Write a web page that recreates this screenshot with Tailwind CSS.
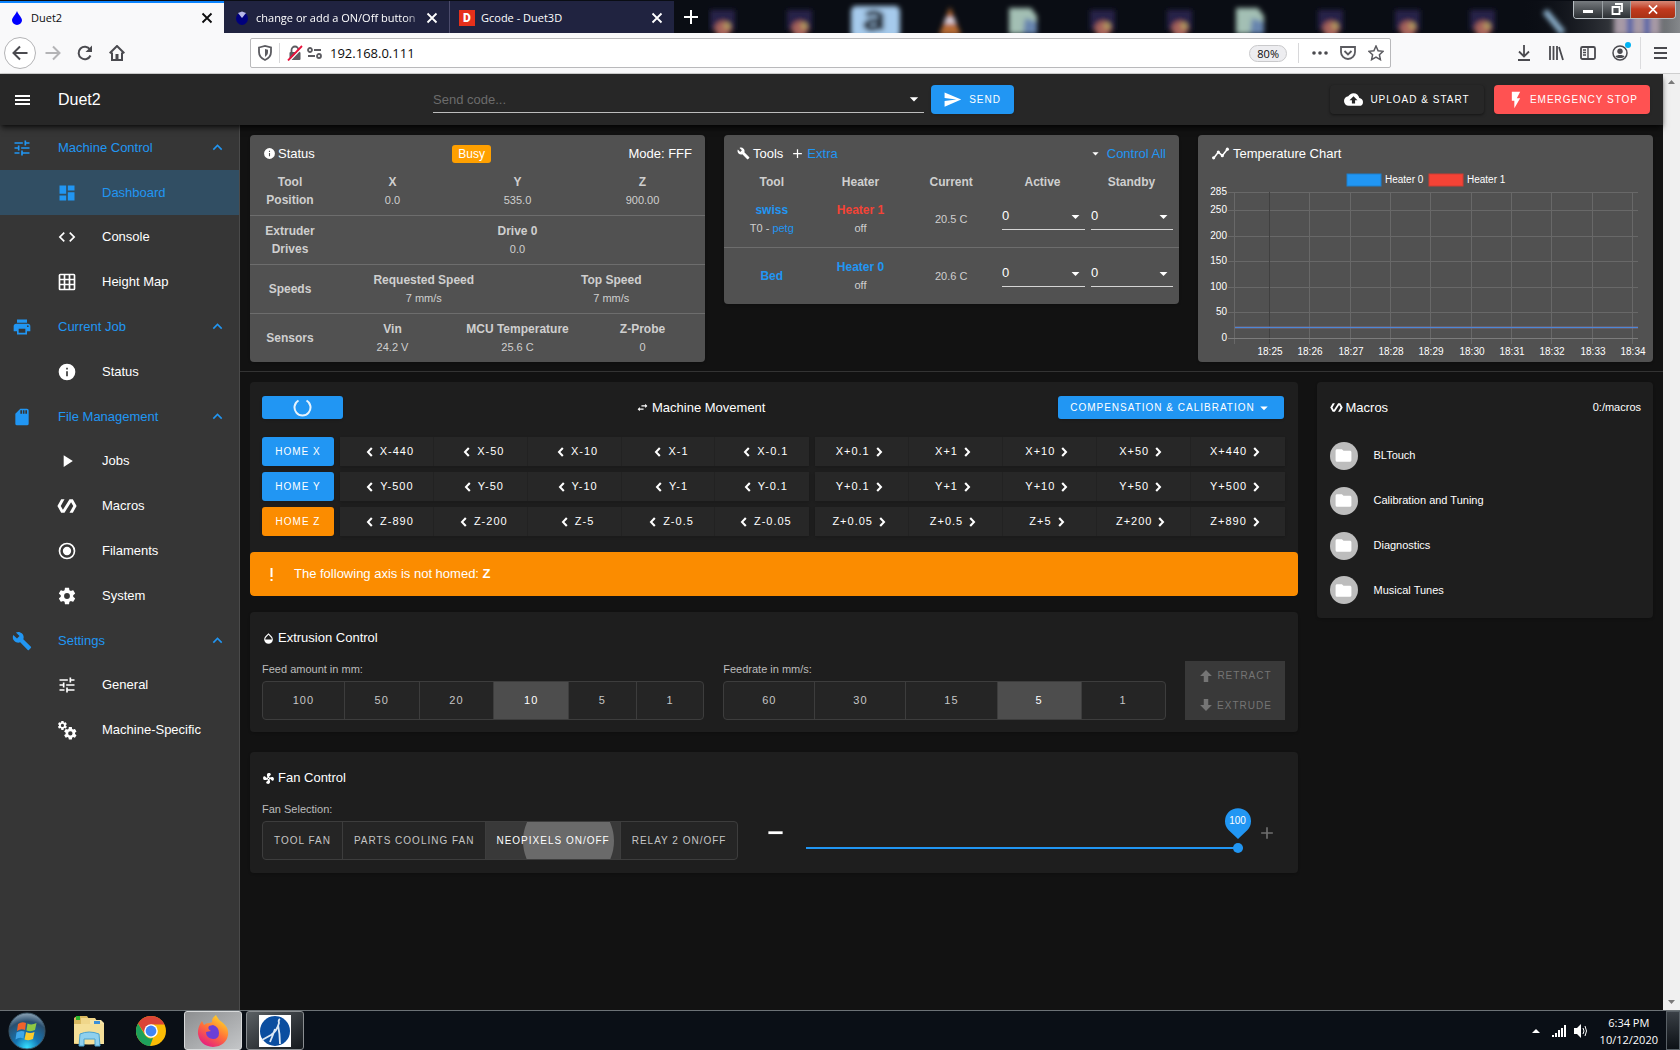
<!DOCTYPE html>
<html lang="en">
<head>
<meta charset="utf-8">
<title>Duet2</title>
<script src="https://cdn.jsdelivr.net/npm/@tailwindcss/browser@4"></script>
</head>
<body class="flex h-screen flex-col overflow-hidden bg-[#121212] font-['Liberation_Sans',Arial,sans-serif] text-[13px] text-white">

<!-- Shared icon set -->
<svg class="hidden" aria-hidden="true">
  <symbol id="tune" viewBox="0 0 24 24"><path d="M3,17V19H9V17H3M3,5V7H13V5H3M13,21V19H21V17H13V15H11V21H13M7,9V11H3V13H7V15H9V9H7M21,13V11H11V13H21M15,9H17V7H21V5H17V3H15V9Z"/></symbol>
  <symbol id="dashboard" viewBox="0 0 24 24"><path d="M13,3V9H21V3M13,21H21V11H13M3,21H11V15H3M3,13H11V3H3V13Z"/></symbol>
  <symbol id="code" viewBox="0 0 24 24"><path d="M14.6,16.6L19.2,12L14.6,7.4L16,6L22,12L16,18L14.6,16.6M9.4,16.6L4.8,12L9.4,7.4L8,6L2,12L8,18L9.4,16.6Z"/></symbol>
  <symbol id="grid" viewBox="0 0 24 24"><path d="M10,4V8H14V4H10M16,4V8H20V4H16M16,10V14H20V10H16M16,16V20H20V16H16M14,20V16H10V20H14M8,20V16H4V20H8M8,14V10H4V14H8M8,8V4H4V8H8M10,14H14V10H10V14M4,2H20A2,2 0 0,1 22,4V20A2,2 0 0,1 20,22H4C2.92,22 2,21.1 2,20V4A2,2 0 0,1 4,2Z"/></symbol>
  <symbol id="printer" viewBox="0 0 24 24"><path d="M18,3H6V7H18M19,12A1,1 0 0,1 18,11A1,1 0 0,1 19,10A1,1 0 0,1 20,11A1,1 0 0,1 19,12M16,19H8V14H16M19,8H5A3,3 0 0,0 2,11V17H6V21H18V17H22V11A3,3 0 0,0 19,8Z"/></symbol>
  <symbol id="info" viewBox="0 0 24 24"><path d="M13,9H11V7H13M13,17H11V11H13M12,2A10,10 0 0,0 2,12A10,10 0 0,0 12,22A10,10 0 0,0 22,12A10,10 0 0,0 12,2Z"/></symbol>
  <symbol id="sd" viewBox="0 0 24 24"><path d="M18,8H16V4H18M15,8H13V4H15M12,8H10V4H12M18,2H10L4,8V20A2,2 0 0,0 6,22H18A2,2 0 0,0 20,20V4A2,2 0 0,0 18,2Z"/></symbol>
  <symbol id="play" viewBox="0 0 24 24"><path d="M8,5.14V19.14L19,12.14L8,5.14Z"/></symbol>
  <symbol id="polymer" viewBox="0 0 24 24"><path d="M19,4H15L7.1,16.63L4.5,12L9,4H5L0.5,12L5,20H9L16.89,7.37L19.5,12L15,20H19L23.5,12L19,4Z"/></symbol>
  <symbol id="radio" viewBox="0 0 24 24"><path d="M12,20A8,8 0 0,1 4,12A8,8 0 0,1 12,4A8,8 0 0,1 20,12A8,8 0 0,1 12,20M12,2A10,10 0 0,0 2,12A10,10 0 0,0 12,22A10,10 0 0,0 22,12A10,10 0 0,0 12,2M12,7A5,5 0 0,0 7,12A5,5 0 0,0 12,17A5,5 0 0,0 17,12A5,5 0 0,0 12,7Z"/></symbol>
  <symbol id="cog" viewBox="0 0 24 24"><path d="M12,15.5A3.5,3.5 0 0,1 8.5,12A3.5,3.5 0 0,1 12,8.5A3.5,3.5 0 0,1 15.5,12A3.5,3.5 0 0,1 12,15.5M19.43,12.97C19.47,12.65 19.5,12.33 19.5,12C19.5,11.67 19.47,11.34 19.43,11L21.54,9.37C21.73,9.22 21.78,8.95 21.66,8.73L19.66,5.27C19.54,5.05 19.27,4.96 19.05,5.05L16.56,6.05C16.04,5.66 15.5,5.32 14.87,5.07L14.5,2.42C14.46,2.18 14.25,2 14,2H10C9.75,2 9.54,2.18 9.5,2.42L9.13,5.07C8.5,5.32 7.96,5.66 7.44,6.05L4.95,5.05C4.73,4.96 4.46,5.05 4.34,5.27L2.34,8.73C2.21,8.95 2.27,9.22 2.46,9.37L4.57,11C4.53,11.34 4.5,11.67 4.5,12C4.5,12.33 4.53,12.65 4.57,12.97L2.46,14.63C2.27,14.78 2.21,15.05 2.34,15.27L4.34,18.73C4.46,18.95 4.73,19.03 4.95,18.95L7.44,17.94C7.96,18.34 8.5,18.68 9.13,18.93L9.5,21.58C9.54,21.82 9.75,22 10,22H14C14.25,22 14.46,21.82 14.5,21.58L14.87,18.93C15.5,18.67 16.04,18.34 16.56,17.94L19.05,18.95C19.27,19.03 19.54,18.95 19.66,18.73L21.66,15.27C21.78,15.05 21.73,14.78 21.54,14.63L19.43,12.97Z"/></symbol>
  <symbol id="cogs" viewBox="0 0 24 24"><use href="#cog" x="0" y="0" width="13" height="13"/><use href="#cog" x="7" y="7" width="18" height="18"/></symbol>
  <symbol id="wrench" viewBox="0 0 24 24"><path d="M22.7,19L13.6,9.9C14.5,7.6 14,4.9 12.1,3C10.1,1 7.1,0.6 4.7,1.7L9,6L6,9L1.6,4.7C0.4,7.1 0.9,10.1 2.9,12.1C4.8,14 7.5,14.5 9.8,13.6L18.9,22.7C19.3,23.1 19.9,23.1 20.3,22.7L22.6,20.4C23.1,20 23.1,19.3 22.7,19Z"/></symbol>
  <symbol id="send" viewBox="0 0 24 24"><path d="M2,21L23,12L2,3V10L17,12L2,14V21Z"/></symbol>
  <symbol id="cloud" viewBox="0 0 24 24"><path d="M14,13V17H10V13H7L12,8L17,13M19.35,10.03C18.67,6.59 15.64,4 12,4C9.11,4 6.6,5.64 5.35,8.03C2.34,8.36 0,10.9 0,14A6,6 0 0,0 6,20H19A5,5 0 0,0 24,15C24,12.36 21.95,10.22 19.35,10.03Z"/></symbol>
  <symbol id="flash" viewBox="0 0 24 24"><path d="M7,2V13H10V22L17,10H13L17,2H7Z"/></symbol>
  <symbol id="up" viewBox="0 0 24 24"><path d="M7.41,15.41L12,10.83L16.59,15.41L18,14L12,8L6,14L7.41,15.41Z"/></symbol>
  <symbol id="left" viewBox="0 0 14 24"><path d="M11.8,17.2L6.8,12L11.8,6.8L9.4,4.5L2.500,12L9.4,19.500Z"/></symbol>
  <symbol id="right" viewBox="0 0 14 24"><path d="M2.200,17.2L7.2,12L2.200,6.8L4.6,4.500L11.500,12L4.6,19.500Z"/></symbol>
  <symbol id="down" viewBox="0 0 24 24"><path d="M7,10L12,15L17,10H7Z"/></symbol>
  <symbol id="plus" viewBox="0 0 24 24"><path d="M19,13H13V19H11V13H5V11H11V5H13V11H19V13Z"/></symbol>
  <symbol id="minus" viewBox="0 0 24 24"><path d="M21,14H3V10.5H21Z"/></symbol>
  <symbol id="trend" viewBox="0 0 24 18"><path d="M2.5 15.5L9 7l5.500 5L21.500 3" fill="none" stroke="currentColor" stroke-width="2.200"/><circle cx="2.500" cy="15" r="2.200"/><circle cx="9" cy="7" r="2.200"/><circle cx="14.500" cy="12" r="2.200"/><circle cx="21.500" cy="3" r="2.200"/></symbol>
  <symbol id="swap" viewBox="0 0 24 24"><path d="M21,9L17,5V8H10V10H17V13M7,11L3,15L7,19V16H14V14H7V11Z"/></symbol>
  <symbol id="drop" viewBox="0 0 24 24"><path d="M17.66,8L12,2.35L6.34,8C4.78,9.56 4,11.64 4,13.64C4,15.64 4.78,17.75 6.34,19.31C7.9,20.87 9.95,21.66 12,21.66C14.05,21.66 16.1,20.87 17.66,19.31C19.22,17.75 20,15.64 20,13.64C20,11.64 19.22,9.56 17.66,8M6,14C6,12 6.62,10.73 7.76,9.6L12,5.27L16.24,9.65C17.38,10.77 18,12 18,14H6Z"/></symbol>
  <symbol id="fan" viewBox="0 0 24 24"><path d="M12,11A1,1 0 0,0 11,12A1,1 0 0,0 12,13A1,1 0 0,0 13,12A1,1 0 0,0 12,11M12.5,2C17,2 17.11,5.57 14.75,6.75C13.76,7.24 13.32,8.29 13.13,9.22C13.61,9.42 14.03,9.73 14.35,10.13C18.05,8.13 22.03,8.92 22.03,12.5C22.03,17 18.46,17.1 17.28,14.73C16.78,13.74 15.72,13.3 14.79,13.11C14.59,13.59 14.28,14 13.88,14.34C15.87,18.03 15.08,22 11.5,22C7,22 6.91,18.42 9.27,17.24C10.25,16.75 10.69,15.71 10.89,14.79C10.4,14.59 9.97,14.27 9.65,13.87C5.96,15.85 2,15.07 2,11.5C2,7 5.56,6.89 6.74,9.26C7.24,10.25 8.29,10.68 9.22,10.87C9.41,10.39 9.73,9.97 10.14,9.65C8.15,5.96 8.94,2 12.5,2Z"/></symbol>
  <symbol id="boldup" viewBox="0 0 24 24"><path d="M15,20H9V12H4.16L12,4.16L19.84,12H15V20Z"/></symbol>
  <symbol id="bolddown" viewBox="0 0 24 24"><path d="M9,4H15V12H19.84L12,19.84L4.16,12H9V4Z"/></symbol>
  <symbol id="folder" viewBox="0 0 24 24"><path d="M10,4H4C2.89,4 2,4.89 2,6V18A2,2 0 0,0 4,20H20A2,2 0 0,0 22,18V8C22,6.89 21.1,6 20,6H12L10,4Z"/></symbol>
  <symbol id="close" viewBox="0 0 12 12"><path d="M1.500 1.500l9 9M10.500 1.500l-9 9" fill="none" stroke="currentColor" stroke-width="1.800"/></symbol>
</svg>

<!-- Browser tabs -->
<div class="flex h-[33px] shrink-0 bg-[#0a0d14] pt-px font-['Open_Sans',sans-serif] text-[11px]">
  <div class="flex w-[224px] items-center border-t-2 border-[#0a84ff] bg-[#f9f9fa] pr-[11px] pl-3 text-[#0c0c0d]">
    <svg class="mr-[9px] h-[14px] w-[10px]" viewBox="0 0 10 14"><path d="M5 0C6.500 4 10 6.500 10 9.300A5 4.700 0 0 1 0 9.300C0 6.500 3.500 4 5 0Z" fill="#00f"/></svg>
    <span class="flex-1">Duet2</span>
    <button aria-label="Close tab"><svg class="size-[12px]"><use href="#close"/></svg></button>
  </div>
  <div class="flex w-[226px] items-center border-r border-[#4b4b6b] bg-[#202340] pt-[2px] pr-[11px] pl-3">
    <svg class="mr-2 h-[14px] w-[12px]" viewBox="0 0 12 14"><ellipse cx="6" cy="7.500" rx="6" ry="6.500" fill="#00007d"/><path d="M2 2l4-1.500L10 2 6 7Z" fill="#b8b8e8"/></svg>
    <span class="mr-1 w-0 flex-1 overflow-hidden mask-r-from-90% mask-r-to-100% whitespace-nowrap">change or add a ON/Off button</span>
    <button aria-label="Close tab"><svg class="size-[12px]"><use href="#close"/></svg></button>
  </div>
  <div class="flex w-[224px] items-center bg-[#202340] pt-[2px] pr-[11px] pl-[9px]">
    <span class="mr-[6px] flex size-4 items-center justify-center bg-[#e6301b] font-['Roboto',sans-serif] text-[12px] font-black">D</span>
    <span class="flex-1">Gcode - Duet3D</span>
    <button aria-label="Close tab"><svg class="size-[12px]"><use href="#close"/></svg></button>
  </div>
  <button class="px-[9px]" aria-label="New tab"><svg class="size-4" viewBox="0 0 16 16"><path d="M8 1v14M1 8h14" stroke="#fff" stroke-width="2"/></svg></button>
  <!-- Desktop icons seen through the glass title bar -->
  <div class="relative min-w-0 flex-1 overflow-hidden">
    <svg class="-ml-7 h-8 w-[1000px]" viewBox="0 0 1000 32" preserveAspectRatio="none">
      <defs>
        <filter id="soft"><feGaussianBlur stdDeviation="2.500"/></filter>
        <linearGradient id="glass" x1="0" x2="1"><stop offset=".84" stop-color="#0a0d14" stop-opacity="0"/><stop offset="1" stop-color="#85888b"/></linearGradient>
        <g id="app"><rect x="-12" y="9" width="25" height="20" fill="#25224a"/><circle cx="1" cy="28" r="8" fill="#a8635c"/><circle cx="5" cy="25" r="3" fill="#b9a560"/></g>
        <g id="doc"><path d="M-14 7H8l6 8v18h-28Z" fill="#a3bfb4"/><path d="M2 17l12 4v12H0Z" fill="#6785ae"/></g>
      </defs>
      <rect width="1000" height="32" fill="url(#glass)"/>
      <g filter="url(#soft)">
        <use href="#app" x="42"/><use href="#app" x="119"/>
        <rect x="171" y="5" width="49" height="32" rx="5" fill="#a6caec"/><path d="M186 14q8-5 15 0v15M201 20q-16-1-15 5 5 6 15-1" fill="none" stroke="#0a0d14" stroke-width="5"/>
        <path d="M270 6l11 28h-22Z" fill="#b76c36"/><path d="M266 17h8l2 5h-12Z" fill="#dde"/>
        <use href="#doc" x="343"/><use href="#app" x="422"/><use href="#app" x="499"/><use href="#doc" x="570"/>
        <use href="#app" x="650"/><use href="#app" x="727"/><use href="#app" x="802"/>
        <path d="M865 10l18 22" stroke="#8fb4d0" stroke-width="6"/>
        <path d="M934 10h46v24h-46Z" fill="#a79aa6"/><path d="M947 14h6v20h-6zM964 14h6v20h-6z" fill="#4f62a8"/>
      </g>
    </svg>
    <div class="absolute -top-px right-1 flex h-[19px] w-[103px] overflow-hidden rounded-b border border-t-0 border-[#b9bfc4] text-white">
      <button class="flex flex-[29] items-center justify-center border-r border-[#9aa0a4] bg-linear-to-b from-[#7c8084] to-[#2b2f33]" aria-label="Minimize"><svg class="h-3 w-3" viewBox="0 0 12 12"><path d="M1 7h10v3H1z" fill="#fff"/></svg></button>
      <button class="flex flex-[27] items-center justify-center border-r border-[#9aa0a4] bg-linear-to-b from-[#7c8084] to-[#2b2f33]" aria-label="Restore"><svg class="size-3" viewBox="0 0 12 12"><path d="M4 1h7v7H9M1.500 4h7v7h-7z" fill="none" stroke="#fff" stroke-width="1.800"/></svg></button>
      <button class="flex flex-[45] items-center justify-center bg-linear-to-b from-[#d8907f] via-[#c23a1e] to-[#a83214]" aria-label="Close"><svg class="h-[11px] w-[12px]"><use href="#close"/></svg></button>
    </div>
  </div>
</div>

<!-- Address bar -->
<div class="flex h-[41px] shrink-0 items-center border-b border-[#cfcfcf] bg-[#f9f9fa] pl-1 font-['Open_Sans',sans-serif] text-[#4a4a4f]">
  <button class="flex size-8 items-center justify-center rounded-full border border-[#b4b4b6] bg-white" aria-label="Back"><svg class="size-4" viewBox="0 0 16 16"><path d="M15.500 8H2M8 1.500L1.500 8 8 14.500" fill="none" stroke="#4a4a4f" stroke-width="2"/></svg></button>
  <button class="flex w-[33px] justify-center" aria-label="Forward"><svg class="size-4" viewBox="0 0 16 16"><path d="M.5 8H14M8 1.500L14.500 8 8 14.500" fill="none" stroke="#b4b4b6" stroke-width="2"/></svg></button>
  <button class="flex w-8 justify-center" aria-label="Reload"><svg class="size-4" viewBox="0 0 16 16"><path d="M13.500 10.500A6.200 6.200 0 1 1 13 4.500" fill="none" stroke="#4a4a4f" stroke-width="2"/><path d="M15 .5V7H8.500Z" fill="#4a4a4f"/></svg></button>
  <button class="flex w-8 justify-center" aria-label="Home"><svg class="size-4" viewBox="0 0 16 16"><path d="M.7 8.300L8 1l7.300 7.300M3 7.500V15h10V7.500" fill="none" stroke="#4a4a4f" stroke-width="2"/><path d="M6.500 9h3v6h-3z" fill="#4a4a4f"/></svg></button>
  <div class="ml-[117px] flex h-[30px] flex-1 items-center rounded-xs border border-[#b9b9bb] bg-white">
    <svg class="ml-[7px] h-4 w-[14px]" viewBox="0 0 14 16"><path d="M1 2.500L7 1l6 1.500V7c0 4-2.500 6.500-6 8-3.500-1.500-6-4-6-8Z" fill="none" stroke="#5b5b60" stroke-width="1.800"/><path d="M7 4l3 .7V7c0 2-1 3.500-3 5Z" fill="#5b5b60"/></svg>
    <span class="mx-[7px] h-5 w-px bg-[#d8d8da]"></span>
    <svg class="size-4" viewBox="0 0 16 16"><path d="M4.500 7V5a3.500 3.500 0 0 1 7 0v2" fill="none" stroke="#5b5b60" stroke-width="1.800"/><rect x="2.500" y="7" width="11" height="8" rx="1" fill="#5b5b60"/><path d="M2 16.500L16 2" stroke="#fff" stroke-width="1.500"/><path d="M1 15.500L15 1" stroke="#e8123c" stroke-width="1.800"/></svg>
    <svg class="ml-1 h-3 w-[15px]" viewBox="0 0 15 12"><g fill="none" stroke="#5b5b60" stroke-width="1.800"><circle cx="3" cy="3" r="2"/><path d="M7 3h7M1 9h7"/><circle cx="12" cy="9" r="2"/></g></svg>
    <input class="ml-2 min-w-0 flex-1 pt-px text-[13px] text-[#0c0c0d] outline-none" aria-label="Address" value="192.168.0.111">
    <span class="mr-[11px] rounded-full border border-[#c9c9cb] bg-[#ededf0] px-[7px] text-[11px]/[15px] text-[#0c0c0d]">80%</span>
    <span class="mr-[13px] h-5 w-px bg-[#d8d8da]"></span>
    <svg class="mr-[12px] h-1 w-4" viewBox="0 0 16 4" fill="#4a4a4f"><circle cx="2" cy="2" r="1.800"/><circle cx="8" cy="2" r="1.800"/><circle cx="14" cy="2" r="1.800"/></svg>
    <svg class="mr-[12px] size-4" viewBox="0 0 16 16" fill="none" stroke="#5b5b60" stroke-width="1.800"><path d="M1 2h14v5a7 7 0 0 1-14 0ZM4.500 6L8 9.500 11.500 6"/></svg>
    <svg class="mr-[6px] size-4" viewBox="0 0 16 16" fill="none" stroke="#5b5b60" stroke-width="1.500"><path d="M8 1l2.100 4.700 5 .6-3.700 3.400 1 5L8 12.200 3.600 14.700l1-5L.9 6.300l5-.6Z"/></svg>
  </div>
  <div class="ml-[125px] flex items-center gap-4">
    <svg class="size-4" viewBox="0 0 16 16" fill="none" stroke="#4a4a4f" stroke-width="1.800"><path d="M8 0v11M3 6.500l5 5 5-5M2 15h12"/></svg>
    <svg class="size-4" viewBox="0 0 16 16" fill="none" stroke="#4a4a4f" stroke-width="1.800"><path d="M2 1v14M5.500 1v14M9 1v14M11 2l4 13"/></svg>
    <svg class="size-4" viewBox="0 0 16 16" fill="none" stroke="#4a4a4f" stroke-width="1.800"><rect x="1" y="2" width="14" height="12" rx="1.500"/><path d="M8 2v12M3 5h3M3 7.500h3M3 10h3" stroke-width="1.400"/></svg>
    <div class="relative"><svg class="size-4" viewBox="0 0 16 16"><circle cx="8" cy="8" r="7" fill="none" stroke="#4a4a4f" stroke-width="1.500"/><circle cx="8" cy="6.300" r="2.700" fill="#4a4a4f"/><path d="M3.500 11.500c1-2 8-2 9 0C11 13.500 5 13.500 3.500 11.500Z" fill="#4a4a4f"/></svg><span class="absolute -top-[3px] -right-[3px] size-[6px] rounded-full bg-[#00b3f4]"></span></div>
  </div>
  <span class="mr-[13px] ml-3 h-8 w-px bg-[#dcdcde]"></span>
  <svg class="mr-[13px] h-[12px] w-[13px]" viewBox="0 0 13 12"><path d="M0 1h13M0 6h13M0 11h13" stroke="#4a4a4f" stroke-width="2"/></svg>
</div>

<div class="flex min-h-0 flex-1">
  <div class="flex min-w-0 flex-1 flex-col">
    <!-- Application bar -->
    <header class="relative flex h-[51px] shrink-0 items-center bg-[#272727] pr-[13px] pl-[15px] shadow-md shadow-black/60">
      <button class="mr-[28px]" aria-label="Menu"><svg class="h-[10px] w-[15px]" viewBox="0 0 15 10"><path d="M0 1h15M0 5h15M0 9h15" stroke="#fff" stroke-width="2"/></svg></button>
      <h1 class="text-[16px]">Duet2</h1>
      <div class="flex-[21]"></div>
      <div class="flex h-[27px] flex-[31] items-center border-b border-[#bdbdbd]">
        <input class="min-w-0 flex-1 pt-px text-[13px] outline-none placeholder:text-[#6c6c6c]" aria-label="Send code" placeholder="Send code...">
        <svg class="size-[20px] fill-white"><use href="#down"/></svg>
      </div>
      <button class="ml-[7px] flex h-[29px] w-[83px] items-center justify-center gap-[7px] rounded bg-[#2196f3] text-[10px] tracking-[1px] shadow"><svg class="size-[19px] fill-white"><use href="#send"/></svg>SEND</button>
      <div class="flex-[20]"></div>
      <button class="flex h-[29px] w-[154px] items-center justify-center gap-[7px] rounded bg-[#272727] text-[10px] tracking-[1px] shadow-[0_1px_3px_rgba(0,0,0,0.5)]"><svg class="size-[19px] fill-white"><use href="#cloud"/></svg>UPLOAD &amp; START</button>
      <button class="ml-[10px] flex h-[29px] w-[156px] items-center justify-center gap-1 rounded bg-[#ff5252] text-[10px] tracking-[1px] shadow"><svg class="size-[20px] fill-white"><use href="#flash"/></svg>EMERGENCY STOP</button>
    </header>

    <div class="flex min-h-0 flex-1">
      <!-- Navigation drawer -->
      <nav class="w-60 shrink-0 border-r border-[#4a4a4a] bg-[#363636]">
        <a href="#" class="flex h-[45px] items-center pr-3 pl-3 text-[#2196f3]"><svg class="mr-[26px] size-[20px] fill-current"><use href="#tune"/></svg><span class="flex-1">Machine Control</span><svg class="size-[19px] fill-current"><use href="#up"/></svg></a>
        <a href="#" class="flex h-[45px] items-center bg-[#314e63] pl-[57px] text-[#2196f3]"><svg class="mr-[25px] size-[20px] fill-current"><use href="#dashboard"/></svg>Dashboard</a>
        <a href="#" class="flex h-11 items-center pl-[57px]"><svg class="mr-[25px] size-[20px] fill-current"><use href="#code"/></svg>Console</a>
        <a href="#" class="flex h-[45px] items-center pl-[57px]"><svg class="mr-[25px] size-[20px] fill-current"><use href="#grid"/></svg>Height Map</a>
        <a href="#" class="flex h-[45px] items-center pr-3 pl-3 text-[#2196f3]"><svg class="mr-[26px] size-[20px] fill-current"><use href="#printer"/></svg><span class="flex-1">Current Job</span><svg class="size-[19px] fill-current"><use href="#up"/></svg></a>
        <a href="#" class="flex h-[45px] items-center pl-[57px]"><svg class="mr-[25px] size-[20px] fill-current"><use href="#info"/></svg>Status</a>
        <a href="#" class="flex h-[45px] items-center pr-3 pl-3 text-[#2196f3]"><svg class="mr-[26px] size-[20px] fill-current"><use href="#sd"/></svg><span class="flex-1">File Management</span><svg class="size-[19px] fill-current"><use href="#up"/></svg></a>
        <a href="#" class="flex h-11 items-center pl-[57px]"><svg class="mr-[25px] size-[20px] fill-current"><use href="#play"/></svg>Jobs</a>
        <a href="#" class="flex h-[45px] items-center pl-[57px]"><svg class="mr-[25px] size-[20px] fill-current"><use href="#polymer"/></svg>Macros</a>
        <a href="#" class="flex h-[45px] items-center pl-[57px]"><svg class="mr-[25px] size-[20px] fill-current"><use href="#radio"/></svg>Filaments</a>
        <a href="#" class="flex h-[45px] items-center pl-[57px]"><svg class="mr-[25px] size-[20px] fill-current"><use href="#cog"/></svg>System</a>
        <a href="#" class="flex h-[45px] items-center pr-3 pl-3 text-[#2196f3]"><svg class="mr-[26px] size-[20px] fill-current"><use href="#wrench"/></svg><span class="flex-1">Settings</span><svg class="size-[19px] fill-current"><use href="#up"/></svg></a>
        <a href="#" class="flex h-11 items-center pl-[57px]"><svg class="mr-[25px] size-[20px] fill-current"><use href="#tune"/></svg>General</a>
        <a href="#" class="flex h-[45px] items-center pl-[57px]"><svg class="mr-[25px] size-[20px] fill-current"><use href="#cogs"/></svg>Machine-Specific</a>
      </nav>

      <main class="min-w-0 flex-1">
        <div class="grid grid-cols-3 items-start gap-[19px] border-b border-[#333] px-[10px] pt-[10px] pb-[9px]">
          <!-- Status -->
          <section class="overflow-hidden rounded bg-[#515151] shadow">
            <div class="flex h-[31px] items-center justify-between px-[13px] pt-[6px]">
              <h2 class="flex items-center gap-[2px]"><svg class="size-[13px] fill-white"><use href="#info"/></svg>Status</h2>
              <span class="rounded-[3px] bg-[#ffa000] px-[6px] text-[12px]/[18px]">Busy</span>
              <span>Mode: FFF</span>
            </div>
            <table class="w-full table-fixed text-center text-[11px]/[18px] text-[#cfcfcf]">
              <colgroup><col class="w-20"><col span="6"></colgroup>
              <tbody>
                <tr class="h-[49px]"><th class="pt-[2px] text-[12px]">Tool<br>Position</th><td colspan="2" class="pt-[2px]"><b class="text-[12px]">X</b><br>0.0</td><td colspan="2" class="pt-[2px]"><b class="text-[12px]">Y</b><br>535.0</td><td colspan="2" class="pt-[2px]"><b class="text-[12px]">Z</b><br>900.00</td></tr>
                <tr class="h-[49px] border-t border-[#6d6d6d]"><th class="text-[12px]">Extruder<br>Drives</th><td colspan="6"><b class="text-[12px]">Drive 0</b><br>0.0</td></tr>
                <tr class="h-[49px] border-t border-[#6d6d6d]"><th class="text-[12px]">Speeds</th><td colspan="3"><b class="text-[12px]">Requested Speed</b><br>7 mm/s</td><td colspan="3"><b class="text-[12px]">Top Speed</b><br>7 mm/s</td></tr>
                <tr class="h-[49px] border-t border-[#6d6d6d]"><th class="text-[12px]">Sensors</th><td colspan="2"><b class="text-[12px]">Vin</b><br>24.2 V</td><td colspan="2"><b class="text-[12px]">MCU Temperature</b><br>25.6 C</td><td colspan="2"><b class="text-[12px]">Z-Probe</b><br>0</td></tr>
              </tbody>
            </table>
          </section>

          <!-- Tools -->
          <section class="overflow-hidden rounded bg-[#515151] shadow">
            <div class="flex h-[31px] items-center px-[13px] pt-[6px]">
              <h2 class="flex items-center gap-[3px]"><svg class="size-[13px] fill-white"><use href="#wrench"/></svg>Tools</h2>
              <a href="#" class="ml-[7px] flex items-center gap-[2px] text-[#2196f3]"><svg class="size-[15px] fill-white"><use href="#plus"/></svg>Extra</a>
              <a href="#" class="ml-auto flex items-center gap-1 text-[#2196f3]"><svg class="size-[15px] fill-white"><use href="#down"/></svg>Control All</a>
            </div>
            <table class="w-full table-fixed text-center text-[11px]/[18px] text-[#cfcfcf]">
              <colgroup><col class="w-[21%]"><col class="w-[18%]"><col class="w-[21%]"><col class="w-[20%]"><col class="w-[20%]"></colgroup>
              <thead><tr class="h-[25px] align-bottom text-[12px]"><th>Tool</th><th>Heater</th><th class="pl-1">Current</th><th>Active</th><th class="pr-1">Standby</th></tr></thead>
              <tbody>
                <tr class="h-[56px]">
                  <td><a href="#" class="text-[12px] font-bold text-[#2196f3]">swiss</a><br>T0 - <a href="#" class="text-[#2196f3]">petg</a></td>
                  <td><a href="#" class="text-[12px] font-bold text-[#f44336]">Heater 1</a><br>off</td>
                  <td class="pl-1">20.5 C</td>
                  <td class="pr-[3px] pb-1 pl-[5px]"><label class="flex h-[27px] items-center border-b border-[#d5d5d5]"><select aria-label="Heater 1 active temperature" class="min-w-0 flex-1 appearance-none text-[13px] text-white"><option>0</option></select><svg class="size-[19px] fill-white"><use href="#down"/></svg></label></td>
                  <td class="pr-[6px] pb-1 pl-[3px]"><label class="flex h-[27px] items-center border-b border-[#d5d5d5]"><select aria-label="Heater 1 standby temperature" class="min-w-0 flex-1 appearance-none text-[13px] text-white"><option>0</option></select><svg class="size-[19px] fill-white"><use href="#down"/></svg></label></td>
                </tr>
                <tr class="h-[57px] border-t border-[#6d6d6d]">
                  <td><a href="#" class="text-[12px] font-bold text-[#2196f3]">Bed</a></td>
                  <td><a href="#" class="text-[12px] font-bold text-[#2196f3]">Heater 0</a><br>off</td>
                  <td class="pl-1">20.6 C</td>
                  <td class="pr-[3px] pb-1 pl-[5px]"><label class="flex h-[27px] items-center border-b border-[#d5d5d5]"><select aria-label="Bed active temperature" class="min-w-0 flex-1 appearance-none text-[13px] text-white"><option>0</option></select><svg class="size-[19px] fill-white"><use href="#down"/></svg></label></td>
                  <td class="pr-[6px] pb-1 pl-[3px]"><label class="flex h-[27px] items-center border-b border-[#d5d5d5]"><select aria-label="Bed standby temperature" class="min-w-0 flex-1 appearance-none text-[13px] text-white"><option>0</option></select><svg class="size-[19px] fill-white"><use href="#down"/></svg></label></td>
                </tr>
              </tbody>
            </table>
          </section>

          <!-- Temperature chart -->
          <section class="overflow-hidden rounded bg-[#515151] shadow">
            <div class="flex h-[31px] items-center px-[13px] pt-[6px]">
              <h2 class="flex items-center gap-[3px]"><svg class="h-[13px] w-[19px] fill-white"><use href="#trend"/></svg>Temperature Chart</h2>
            </div>
            <svg class="w-full" viewBox="0 0 455 196" font-size="10" fill="#fff">
              <rect x="149" y="8" width="34" height="12" fill="#2196f3" stroke="#1d80cf"/><text x="187" y="17">Heater 0</text>
              <rect x="231" y="8" width="34" height="12" fill="#f44336" stroke="#cf3d33"/><text x="269" y="17">Heater 1</text>
              <path d="M30 26.500H440M30 44.500H440M30 70.500H440M30 95.500H440M30 121.500H440M30 146.500H440M36.500 26V178M111.500 26V178M152.500 26V178M192.500 26V178M232.500 26V178M273.500 26V178M313.500 26V178M353.500 26V178M394.500 26V178M434.500 26V178" stroke="#686868" fill="none"/>
              <path d="M71.500 26V178" stroke="#404040"/><path d="M30 172.500H440" stroke="#7c7c7c"/>
              <path d="M37 161.500H440" stroke="#7a6a84" stroke-width="2"/><path d="M37 161.500H440" stroke="#4c88d6"/>
              <g text-anchor="end"><text x="29" y="29">285</text><text x="29" y="47">250</text><text x="29" y="73">200</text><text x="29" y="98">150</text><text x="29" y="124">100</text><text x="29" y="149">50</text><text x="29" y="175">0</text></g>
              <g text-anchor="middle"><text x="72" y="189">18:25</text><text x="112" y="189">18:26</text><text x="153" y="189">18:27</text><text x="193" y="189">18:28</text><text x="233" y="189">18:29</text><text x="274" y="189">18:30</text><text x="314" y="189">18:31</text><text x="354" y="189">18:32</text><text x="395" y="189">18:33</text><text x="435" y="189">18:34</text></g>
            </svg>
          </section>
        </div>

        <div class="grid grid-cols-4 items-start gap-[19px] px-[10px] pt-[10px]">
          <div class="col-span-3">
            <!-- Machine movement -->
            <section class="overflow-hidden rounded bg-[#1e1e1e]">
              <div class="flex items-center justify-between pt-[14px] pr-[13px] pb-[18px] pl-3">
                <button class="flex h-[23px] w-[81px] items-center justify-center rounded-[3px] bg-[#2196f3] shadow" aria-label="Homing in progress"><svg class="size-[19px]" viewBox="0 0 19 19"><path d="M5.500 2.500a8 8 0 1 0 8 0" fill="none" stroke="#e6f3fd" stroke-width="2"/></svg></button>
                <h2 class="flex items-center gap-[3px]"><svg class="size-[13px] fill-white"><use href="#swap"/></svg>Machine Movement</h2>
                <button class="flex h-[23px] w-[226px] items-center justify-center rounded-[3px] bg-[#2196f3] text-[10px] tracking-[1px] shadow">COMPENSATION &amp; CALIBRATION<svg class="size-[18px] fill-white"><use href="#down"/></svg></button>
              </div>
              <div class="flex flex-col gap-[6px] pr-[13px] pb-4 pl-3 text-[11px] tracking-[1px]">
                <div class="flex h-[29px] gap-[6px]">
                  <button class="w-[72px] rounded-[3px] bg-[#2196f3] text-[10px] shadow">HOME X</button>
                  <div class="grid flex-1 grid-cols-5 divide-x divide-[#222] bg-[#272727] shadow">
                    <button class="flex items-center justify-center gap-[6px] pl-[6px]"><svg class="h-4 w-[9px] fill-white"><use href="#left"/></svg>X-440</button>
                    <button class="flex items-center justify-center gap-[6px] pl-[6px]"><svg class="h-4 w-[9px] fill-white"><use href="#left"/></svg>X-50</button>
                    <button class="flex items-center justify-center gap-[6px] pl-[6px]"><svg class="h-4 w-[9px] fill-white"><use href="#left"/></svg>X-10</button>
                    <button class="flex items-center justify-center gap-[6px] pl-[6px]"><svg class="h-4 w-[9px] fill-white"><use href="#left"/></svg>X-1</button>
                    <button class="flex items-center justify-center gap-[6px] pl-[6px]"><svg class="h-4 w-[9px] fill-white"><use href="#left"/></svg>X-0.1</button>
                  </div>
                  <div class="grid flex-1 grid-cols-5 divide-x divide-[#222] bg-[#272727] shadow">
                    <button class="flex items-center justify-center gap-[5px] pr-1">X+0.1<svg class="h-4 w-[9px] fill-white"><use href="#right"/></svg></button>
                    <button class="flex items-center justify-center gap-[5px] pr-1">X+1<svg class="h-4 w-[9px] fill-white"><use href="#right"/></svg></button>
                    <button class="flex items-center justify-center gap-[5px] pr-1">X+10<svg class="h-4 w-[9px] fill-white"><use href="#right"/></svg></button>
                    <button class="flex items-center justify-center gap-[5px] pr-1">X+50<svg class="h-4 w-[9px] fill-white"><use href="#right"/></svg></button>
                    <button class="flex items-center justify-center gap-[5px] pr-1">X+440<svg class="h-4 w-[9px] fill-white"><use href="#right"/></svg></button>
                  </div>
                </div>
                <div class="flex h-[29px] gap-[6px]">
                  <button class="w-[72px] rounded-[3px] bg-[#2196f3] text-[10px] shadow">HOME Y</button>
                  <div class="grid flex-1 grid-cols-5 divide-x divide-[#222] bg-[#272727] shadow">
                    <button class="flex items-center justify-center gap-[6px] pl-[6px]"><svg class="h-4 w-[9px] fill-white"><use href="#left"/></svg>Y-500</button>
                    <button class="flex items-center justify-center gap-[6px] pl-[6px]"><svg class="h-4 w-[9px] fill-white"><use href="#left"/></svg>Y-50</button>
                    <button class="flex items-center justify-center gap-[6px] pl-[6px]"><svg class="h-4 w-[9px] fill-white"><use href="#left"/></svg>Y-10</button>
                    <button class="flex items-center justify-center gap-[6px] pl-[6px]"><svg class="h-4 w-[9px] fill-white"><use href="#left"/></svg>Y-1</button>
                    <button class="flex items-center justify-center gap-[6px] pl-[6px]"><svg class="h-4 w-[9px] fill-white"><use href="#left"/></svg>Y-0.1</button>
                  </div>
                  <div class="grid flex-1 grid-cols-5 divide-x divide-[#222] bg-[#272727] shadow">
                    <button class="flex items-center justify-center gap-[5px] pr-1">Y+0.1<svg class="h-4 w-[9px] fill-white"><use href="#right"/></svg></button>
                    <button class="flex items-center justify-center gap-[5px] pr-1">Y+1<svg class="h-4 w-[9px] fill-white"><use href="#right"/></svg></button>
                    <button class="flex items-center justify-center gap-[5px] pr-1">Y+10<svg class="h-4 w-[9px] fill-white"><use href="#right"/></svg></button>
                    <button class="flex items-center justify-center gap-[5px] pr-1">Y+50<svg class="h-4 w-[9px] fill-white"><use href="#right"/></svg></button>
                    <button class="flex items-center justify-center gap-[5px] pr-1">Y+500<svg class="h-4 w-[9px] fill-white"><use href="#right"/></svg></button>
                  </div>
                </div>
                <div class="flex h-[29px] gap-[6px]">
                  <button class="w-[72px] rounded-[3px] bg-[#fb8c00] text-[10px] shadow">HOME Z</button>
                  <div class="grid flex-1 grid-cols-5 divide-x divide-[#222] bg-[#272727] shadow">
                    <button class="flex items-center justify-center gap-[6px] pl-[6px]"><svg class="h-4 w-[9px] fill-white"><use href="#left"/></svg>Z-890</button>
                    <button class="flex items-center justify-center gap-[6px] pl-[6px]"><svg class="h-4 w-[9px] fill-white"><use href="#left"/></svg>Z-200</button>
                    <button class="flex items-center justify-center gap-[6px] pl-[6px]"><svg class="h-4 w-[9px] fill-white"><use href="#left"/></svg>Z-5</button>
                    <button class="flex items-center justify-center gap-[6px] pl-[6px]"><svg class="h-4 w-[9px] fill-white"><use href="#left"/></svg>Z-0.5</button>
                    <button class="flex items-center justify-center gap-[6px] pl-[6px]"><svg class="h-4 w-[9px] fill-white"><use href="#left"/></svg>Z-0.05</button>
                  </div>
                  <div class="grid flex-1 grid-cols-5 divide-x divide-[#222] bg-[#272727] shadow">
                    <button class="flex items-center justify-center gap-[5px] pr-1">Z+0.05<svg class="h-4 w-[9px] fill-white"><use href="#right"/></svg></button>
                    <button class="flex items-center justify-center gap-[5px] pr-1">Z+0.5<svg class="h-4 w-[9px] fill-white"><use href="#right"/></svg></button>
                    <button class="flex items-center justify-center gap-[5px] pr-1">Z+5<svg class="h-4 w-[9px] fill-white"><use href="#right"/></svg></button>
                    <button class="flex items-center justify-center gap-[5px] pr-1">Z+200<svg class="h-4 w-[9px] fill-white"><use href="#right"/></svg></button>
                    <button class="flex items-center justify-center gap-[5px] pr-1">Z+890<svg class="h-4 w-[9px] fill-white"><use href="#right"/></svg></button>
                  </div>
                </div>
              </div>
              <div role="alert" class="flex h-11 items-center rounded bg-[#fb8c00] pl-5">
                <svg class="mr-[21px] h-[13px] w-[3px] fill-white" viewBox="0 0 3 13"><path d="M.5 0h2v9h-2zM.5 11h2v2h-2z"/></svg>
                <p>The following axis is not homed: <b>Z</b></p>
              </div>
            </section>

            <!-- Extrusion control -->
            <section class="mt-4 rounded bg-[#1e1e1e] pt-[17px] pr-[13px] pb-3 pl-3 shadow">
              <h2 class="flex h-[18px] items-center gap-[3px]"><svg class="size-[13px] fill-white"><use href="#drop"/></svg>Extrusion Control</h2>
              <div class="mt-[14px] flex gap-[19px]">
                <div class="flex-1">
                  <p class="pb-1 text-[11px]/[16px] text-[#bcbcbc]">Feed amount in mm:</p>
                  <div class="flex h-[39px] divide-x divide-[#3d3d3d] overflow-hidden rounded border border-[#3d3d3d] bg-[#252525] text-[11px] tracking-[1px] text-[#c6c6c6]">
                    <button class="flex-auto">100</button><button class="flex-auto">50</button><button class="flex-auto">20</button><button class="flex-auto bg-[#4d4d4d] text-white">10</button><button class="flex-auto">5</button><button class="flex-auto">1</button>
                  </div>
                </div>
                <div class="flex-1">
                  <p class="pb-1 text-[11px]/[16px] text-[#bcbcbc]">Feedrate in mm/s:</p>
                  <div class="flex h-[39px] divide-x divide-[#3d3d3d] overflow-hidden rounded border border-[#3d3d3d] bg-[#252525] text-[11px] tracking-[1px] text-[#c6c6c6]">
                    <button class="flex-auto">60</button><button class="flex-auto">30</button><button class="flex-auto">15</button><button class="flex-auto bg-[#4d4d4d] text-white">5</button><button class="flex-auto">1</button>
                  </div>
                </div>
                <div class="flex w-[100px] flex-col self-stretch bg-[#393939] text-[10px] tracking-[1px] text-[#757575]">
                  <button disabled class="flex flex-1 items-center justify-center gap-[2px]"><svg class="size-[18px] fill-current"><use href="#boldup"/></svg>RETRACT</button>
                  <button disabled class="flex flex-1 items-center justify-center gap-[2px]"><svg class="size-[18px] fill-current"><use href="#bolddown"/></svg>EXTRUDE</button>
                </div>
              </div>
            </section>

            <!-- Fan control -->
            <section class="mt-5 rounded bg-[#1e1e1e] pt-[17px] pr-[13px] pb-[13px] pl-3 shadow">
              <h2 class="flex h-[18px] items-center gap-[3px]"><svg class="size-[13px] fill-white"><use href="#fan"/></svg>Fan Control</h2>
              <div class="mt-[14px] flex">
                <div>
                  <p class="pb-1 text-[11px]/[16px] text-[#bcbcbc]">Fan Selection:</p>
                  <div class="flex h-[39px] divide-x divide-[#3d3d3d] overflow-hidden rounded border border-[#3d3d3d] bg-[#252525] text-[10px] tracking-[1px] text-[#c6c6c6]">
                    <button class="px-[11px]">TOOL FAN</button>
                    <button class="px-[11px]">PARTS COOLING FAN</button>
                    <button class="relative overflow-hidden bg-[#393939] px-[10px] text-white"><span class="absolute top-1/2 left-[37px] size-[91px] -translate-y-1/2 rounded-full bg-[#6a6a6a]"></span><span class="relative">NEOPIXELS ON/OFF</span></button>
                    <button class="px-[11px]">RELAY 2 ON/OFF</button>
                  </div>
                </div>
                <div class="ml-[28px] flex flex-1 items-start pt-[22px]">
                  <button aria-label="Decrease" class="mr-[21px]"><svg class="size-[19px] fill-white"><use href="#minus"/></svg></button>
                  <div class="relative mr-[14px] flex flex-1 pt-[20px]">
                    <input type="range" min="0" max="100" value="100" aria-label="Fan speed" class="h-[10px] w-full appearance-none bg-[linear-gradient(#2196f3,#2196f3)] bg-[length:100%_2px] bg-center bg-no-repeat [&::-webkit-slider-thumb]:size-[10px] [&::-webkit-slider-thumb]:appearance-none [&::-webkit-slider-thumb]:rounded-full [&::-webkit-slider-thumb]:bg-[#2196f3]">
                    <div class="absolute -top-[15px] -right-[8px] h-[31px] w-[26px]">
                      <svg class="absolute inset-0 size-full fill-[#2196f3]" viewBox="0 0 26 31"><path d="M13 31L3.500 22A13 13 0 1 1 22.500 22Z"/></svg>
                      <span class="relative block text-center text-[10px]/[26px]">100</span>
                    </div>
                  </div>
                  <button aria-label="Increase" disabled class="mr-[8px]"><svg class="size-[20px] fill-[#6f6f6f]"><use href="#plus"/></svg></button>
                </div>
              </div>
            </section>
          </div>

          <!-- Macros -->
          <section class="rounded bg-[#1e1e1e] pr-3 pb-[6px] pl-[13px] shadow">
            <div class="flex h-[51px] items-center justify-between">
              <h2 class="flex items-center gap-[3px]"><svg class="size-[13px] fill-white"><use href="#polymer"/></svg>Macros</h2>
              <span class="text-[11px]">0:/macros</span>
            </div>
            <ul class="text-[11px]">
              <li><a href="#" class="flex h-[45px] items-center gap-4"><span class="flex size-7 items-center justify-center rounded-full bg-[#bdbdbd]"><svg class="size-[19px] fill-white"><use href="#folder"/></svg></span>BLTouch</a></li>
              <li><a href="#" class="flex h-[45px] items-center gap-4"><span class="flex size-7 items-center justify-center rounded-full bg-[#bdbdbd]"><svg class="size-[19px] fill-white"><use href="#folder"/></svg></span>Calibration and Tuning</a></li>
              <li><a href="#" class="flex h-[45px] items-center gap-4"><span class="flex size-7 items-center justify-center rounded-full bg-[#bdbdbd]"><svg class="size-[19px] fill-white"><use href="#folder"/></svg></span>Diagnostics</a></li>
              <li><a href="#" class="flex h-11 items-center gap-4"><span class="flex size-7 items-center justify-center rounded-full bg-[#bdbdbd]"><svg class="size-[19px] fill-white"><use href="#folder"/></svg></span>Musical Tunes</a></li>
            </ul>
          </section>
        </div>
      </main>
    </div>
  </div>

  <!-- Scroll bar -->
  <div class="flex w-[17px] shrink-0 flex-col items-center justify-between bg-[#f0f0f0] py-[6px]">
    <svg class="h-1 w-[7px] fill-[#7a7a7a]" viewBox="0 0 7 4"><path d="M0 4L3.500 0 7 4Z"/></svg>
    <svg class="h-1 w-[7px] fill-[#7a7a7a]" viewBox="0 0 7 4"><path d="M0 0L3.500 4 7 0Z"/></svg>
  </div>
</div>

<!-- Taskbar -->
<footer class="flex h-10 shrink-0 items-stretch border-t border-[#6c7276] bg-[#0a0f16] pl-2 font-['Open_Sans',sans-serif]">
  <button class="mr-[26px] self-center" aria-label="Start"><svg class="size-[38px]" viewBox="0 0 38 38"><defs><radialGradient id="orb" cx=".5" cy=".95" r=".95"><stop offset="0" stop-color="#35e0ff"/><stop offset=".35" stop-color="#1576b4"/><stop offset=".75" stop-color="#2a4f6f"/><stop offset="1" stop-color="#8fa6b8"/></radialGradient></defs><circle cx="19" cy="19" r="18" fill="url(#orb)" stroke="#3a5566"/><path d="M10 12q4-3 8-1l-1 7q-4-2-8 1Z" fill="#f0622a"/><path d="M19.500 11.500q4 2 9-.5l-1.500 7q-4 2-8.500.5Z" fill="#8fc843"/><path d="M8.500 20.500q4-2.500 8-1l-1 7q-4-2-8 1Z" fill="#3fa7ea"/><path d="M18 20q4 2 8.500 0L25 27q-4 2-8.500.5Z" fill="#fbcb2e"/></svg></button>
  <button class="mr-[30px] self-center" aria-label="Explorer"><svg class="h-[32px] w-[34px]" viewBox="0 0 34 32"><path d="M2 3l3-2h10l2 3v25H2Z" fill="#d9b960"/><path d="M9 3h14l2 3v23H9Z" fill="#f0d68a"/><path d="M18 5h11l3 3v21H18Z" fill="#f6e3a6"/><path d="M2 9h30v19q-15 3-30 0Z" fill="#f5df98"/><path d="M4 1h4v4H4z" fill="#2db62d"/><path d="M22 6h6v3h-6z" fill="#3d8fd8"/><path d="M8 19q9-4 19 0l1 12h-5v-7H12v7H7Z" fill="#8fd0ee" stroke="#4ba3d0"/></svg></button>
  <button class="mr-[18px] self-center" aria-label="Chrome"><svg class="size-[30px]" viewBox="0 0 30 30"><circle cx="15" cy="15" r="15" fill="#fbbc05"/><path d="M15 0A15 15 0 0 1 28.500 8.500H15L8.500 17 2 7.500A15 15 0 0 1 15 0Z" fill="#db4437"/><path d="M2 7.500L9 19q3 4.500 8 3L14 30A15 15 0 0 1 2 7.500Z" fill="#1da05a"/><circle cx="15" cy="15" r="6.800" fill="#fff"/><circle cx="15" cy="15" r="5.400" fill="#4285f4"/></svg></button>
  <button class="mr-1 flex w-[58px] items-center justify-center rounded-[3px] border border-[#d8dadb] bg-linear-to-br from-[#8c8e90] to-[#c4c6c8]" aria-label="Firefox"><svg class="size-[32px]" viewBox="0 0 32 32"><defs><linearGradient id="fx" x1=".8" y1="0" x2=".2" y2="1"><stop offset="0" stop-color="#ffe226"/><stop offset=".5" stop-color="#ff7139"/><stop offset="1" stop-color="#e31587"/></linearGradient></defs><path d="M19 0q2 5 7 8 6 5 5 12-2 11-15 12Q3 31 1 19q-.5-7 4-13l2 4q2-2 5-2 4 0 3-3 1-3 4-5Z" fill="url(#fx)"/><path d="M16 10q6 2 6 8t-6 6q-7-1-7-7l5-1q-4-2-2-5Z" fill="#6b3fd6"/></svg></button>
  <button class="flex w-[58px] items-center justify-center rounded-[3px] border border-[#8a8e91] bg-linear-to-br from-[#5b6064] to-[#15191d]" aria-label="Slicer"><svg class="size-[32px]" viewBox="0 0 32 32"><path fill="#fff" d="M0 0h32v32H0z"/><circle cx="16" cy="16" r="15" fill="#0b4ea0"/><path d="M21 4q-2 1-1 4-2 8-8 12l-9 5M16 14q-2 6-5 13M19 10q2 9 2 19" fill="none" stroke="#dce8f5" stroke-width="1.800"/></svg></button>
  <div class="flex-1"></div>
  <div class="flex items-center gap-3 text-center text-[11px]/[17px]">
    <svg class="h-1 w-2 fill-white" viewBox="0 0 8 4"><path d="M0 4l4-4 4 4Z"/></svg>
    <svg class="h-[12px] w-[14px] fill-white" viewBox="0 0 14 12"><path d="M0 10h2v2H0zM3 8h2v4H3zM6 5h2v7H6zM9 3h2v9H9zM12 0h2v12h-2z"/></svg>
    <svg class="-ml-1 size-[14px] fill-white" viewBox="0 0 14 14"><path d="M0 4h3l4-4v14l-4-4H0z"/><path d="M9 4q2 3 0 6M11 2q3 5 0 10" fill="none" stroke="#fff"/></svg>
    <div class="whitespace-nowrap"><p>6:34 PM</p><p>10/12/2020</p></div>
  </div>
  <button class="ml-2 w-[14px] border border-[#596066] bg-linear-to-b from-[#3a4046] to-[#0d1116]" aria-label="Show desktop"></button>
</footer>
</body>
</html>
